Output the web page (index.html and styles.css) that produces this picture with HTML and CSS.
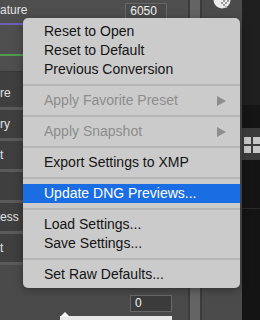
FILE: index.html
```html
<!DOCTYPE html>
<html lang="en">
<head>
    <meta charset="UTF-8">
    <meta name="viewport" content="width=device-width, initial-scale=1.0">
    <title>Camera Raw Settings Menu</title>
    <link rel="stylesheet" href="styles.css">
</head>
<body>
    <div class="app">
        <div class="panel">
            <div class="head">
                <div class="field">
                    <span class="label">ature</span>
                    <span class="num">6050</span>
                </div>
                <div class="track purple"></div>
                <div class="field tall"></div>
                <div class="track green"></div>
            </div>

            <div class="rows">
                <div class="row first"><span class="label">re</span></div>
                <div class="row"><span class="label">ry</span></div>
                <div class="row"><span class="label">t</span></div>
                <div class="row"><span class="label"></span></div>
                <div class="row"><span class="label">ess</span></div>
                <div class="row"><span class="label">t</span></div>
            </div>

            <div class="foot">
                <span class="num dark">0</span>
                <div class="slider"><span class="thumb"></span></div>
            </div>
        </div>

        <div class="scroll"></div>

        <div class="gutter">
            <svg class="knob" width="18" height="10" viewBox="0 0 18 10">
                <circle cx="9" cy="0" r="8.5" fill="#ececec"/>
                <rect x="10" y="0" width="2" height="2" fill="#9a9a9a"/>
                <rect x="12" y="2" width="2" height="2" fill="#9a9a9a"/>
                <rect x="10" y="4" width="2" height="2" fill="#9a9a9a"/>
                <rect x="14" y="0" width="2" height="2" fill="#9a9a9a"/>
                <rect x="8" y="2" width="2" height="2" fill="#9a9a9a"/>
                <rect x="12" y="6" width="2" height="2" fill="#b5b5b5"/>
            </svg>
        </div>

        <div class="side">
            <div class="side-top"></div>
            <div class="side-gap"></div>
            <div class="side-tools">
                <span class="sq"></span><span class="sq"></span>
                <span class="sq"></span><span class="sq"></span>
            </div>
            <div class="side-rest"></div>
        </div>
    </div>

    <!-- Всплывающее меню настроек -->
    <ul class="menu">
        <li class="item">Reset to Open</li>
        <li class="item">Reset to Default</li>
        <li class="item">Previous Conversion</li>
        <li class="sep"></li>
        <li class="item disabled">Apply Favorite Preset
            <svg class="arrow" width="9" height="10" viewBox="0 0 9 10"><polygon points="0,0 9,5 0,10" fill="#8e8e8e"/></svg>
        </li>
        <li class="sep"></li>
        <li class="item disabled">Apply Snapshot
            <svg class="arrow" width="9" height="10" viewBox="0 0 9 10"><polygon points="0,0 9,5 0,10" fill="#8e8e8e"/></svg>
        </li>
        <li class="sep"></li>
        <li class="item">Export Settings to XMP</li>
        <li class="sep"></li>
        <li class="item active">Update DNG Previews...</li>
        <li class="sep"></li>
        <li class="item">Load Settings...</li>
        <li class="item">Save Settings...</li>
        <li class="sep"></li>
        <li class="item">Set Raw Defaults...</li>
    </ul>
</body>
</html>
```

FILE: styles.css
```css
body {
    margin: 0;
    width: 260px;
    height: 320px;
    overflow: hidden;
    background-color: #4a4a4a;
    font-family: "Liberation Sans", Arial, sans-serif;
    color: #e2e2e2;
}

.app {
    display: flex;
    height: 320px;
}

/* Левая панель */
.panel {
    width: 193px;
    display: flex;
    flex-direction: column;
}

.head {
    height: 72px;
    background-color: #4e4e4e;
    border-bottom: 1px solid #383838;
}

.field {
    height: 23px;
    display: flex;
    align-items: flex-start;
}

.field.tall {
    height: 29px;
}

.label {
    font-size: 12px;
    line-height: 20px;
    white-space: nowrap;
}

.num {
    box-sizing: border-box;
    width: 42px;
    height: 16px;
    margin: 3px 21px 0 auto;
    padding-left: 4px;
    border: 1px solid #686868;
    background-color: #4a4a4a;
    font-size: 12px;
    line-height: 14px;
    color: #f2f2f2;
}

.num.dark {
    height: 17px;
    margin: 30px 0 0 130px;
    background-color: #3c3c3c;
    line-height: 15px;
}

.track {
    height: 2px;
}

.track.purple {
    background-color: #6c60b4;
}

.track.green {
    background-color: #4f9d4b;
}

.rows {
    background-color: #3f3f3f;
}

.row {
    height: 28px;
    border-bottom: 3px solid #5a5a5a;
    display: flex;
    align-items: center;
}

.row.first {
    padding-top: 7px;
}

.foot {
    flex: 1;
    display: flex;
    flex-direction: column;
}

.slider {
    position: relative;
    height: 4px;
    width: 112px;
    margin: 4px 0 0 60px;
    background-color: #e8e8e8;
}

.thumb {
    position: absolute;
    left: 0;
    top: -4px;
    width: 0;
    height: 0;
    border-left: 5px solid transparent;
    border-right: 5px solid transparent;
    border-bottom: 5px solid #f4f4f4;
}

/* Полоса прокрутки */
.scroll {
    box-sizing: border-box;
    width: 14px;
    border-left: 2px solid #3c3c3c;
    border-right: 2px solid #3c3c3c;
    background-color: #646464;
}

.gutter {
    width: 41px;
    background-color: #4b4b4b;
}

.knob {
    display: block;
    margin-left: 11px;
}

/* Тёмная колонка справа */
.side {
    flex: 1;
    display: flex;
    flex-direction: column;
}

.side-top {
    height: 105px;
    background-color: #1f1f1f;
}

.side-gap {
    height: 23px;
    background-color: #151515;
}

.side-tools {
    height: 32px;
    box-sizing: border-box;
    padding: 9px 0 0 2px;
    background-color: #3b3b3b;
    display: grid;
    grid-template-columns: 7px 7px;
    grid-auto-rows: 7px;
    gap: 2px;
}

.sq {
    background-color: #c6c6c6;
}

.side-rest {
    flex: 1;
    background-color: #141414;
    background-image: linear-gradient(#2a2a2a, #2a2a2a);
    background-size: 100% 1px;
    background-position: 0 48px;
    background-repeat: no-repeat;
}

/* Меню */
.menu {
    position: absolute;
    left: 23px;
    top: 18px;
    width: 217px;
    margin: 0;
    padding: 4px 0;
    list-style: none;
    background-color: #cbcbcb;
    border-radius: 5px;
    box-shadow: 0 2px 8px rgba(0, 0, 0, 0.35);
}

.item {
    position: relative;
    height: 19px;
    padding-left: 21px;
    font-size: 14px;
    line-height: 19px;
    color: #141414;
    white-space: nowrap;
}

.item.disabled {
    color: #8d8d8d;
}

.item.active {
    background-color: #1a6de2;
    color: #fff;
}

.arrow {
    position: absolute;
    right: 14px;
    top: 5px;
}

.sep {
    height: 12px;
    background-image: linear-gradient(#b6b6b6, #b6b6b6);
    background-size: 100% 2px;
    background-position: 0 5px;
    background-repeat: no-repeat;
}
```
